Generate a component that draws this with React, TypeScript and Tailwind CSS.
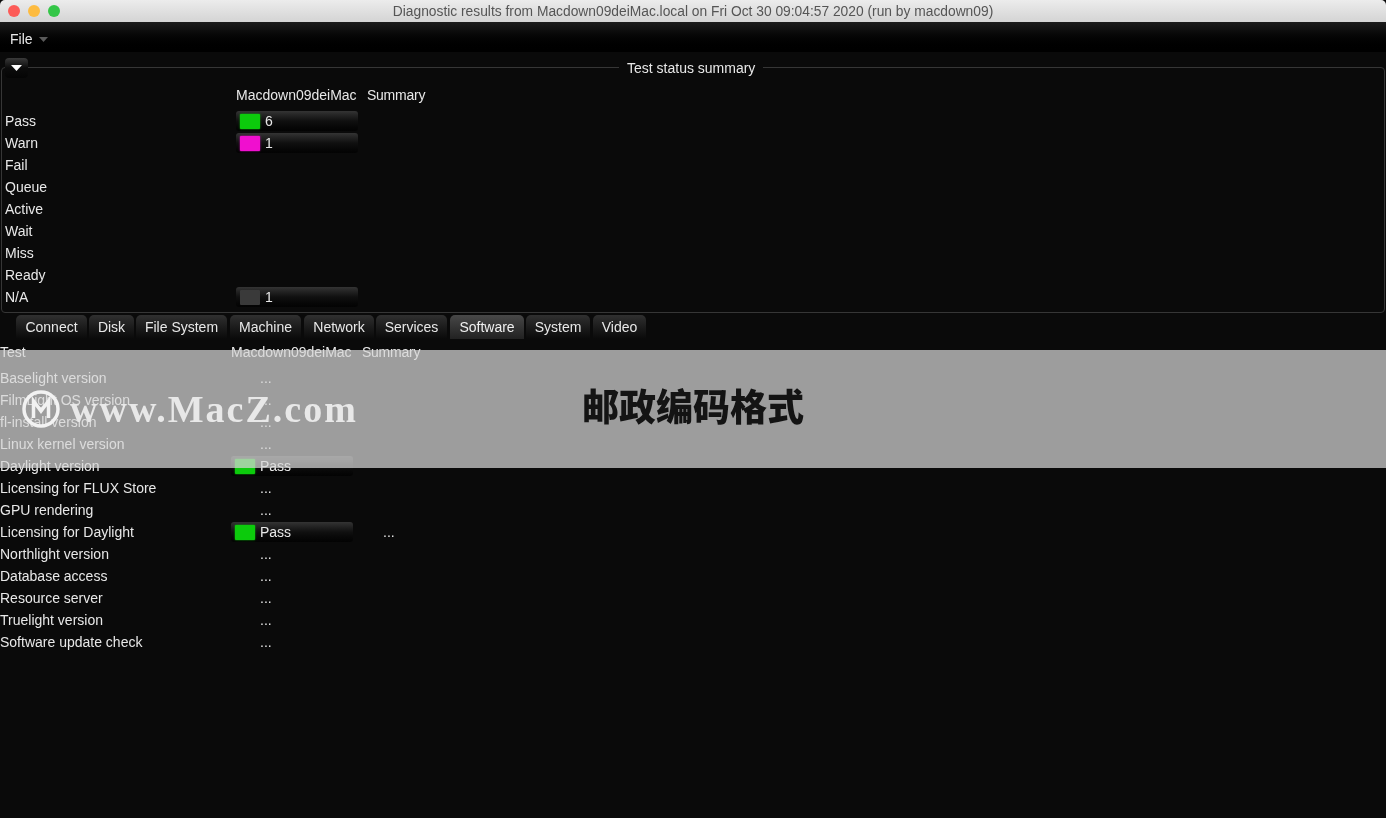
import React from 'react';

type Status = { color: string; label: string };

const summaryRows: { name: string; status?: Status }[] = [
  { name: 'Pass', status: { color: 'bg-[#0ccb0c] shadow-[0_0_2px_#0ccb0c]', label: '6' } },
  { name: 'Warn', status: { color: 'bg-[#f00fcf] shadow-[0_0_2px_#f00fcf]', label: '1' } },
  { name: 'Fail' },
  { name: 'Queue' },
  { name: 'Active' },
  { name: 'Wait' },
  { name: 'Miss' },
  { name: 'Ready' },
  { name: 'N/A', status: { color: 'bg-[#3a3a3a]', label: '1' } },
];

const pass = { color: 'bg-[#0ccb0c] shadow-[0_0_2px_#0ccb0c]', label: 'Pass' };

const softwareRows: { name: string; status?: Status; extra?: boolean }[] = [
  { name: 'Baselight version' },
  { name: 'FilmLight OS version' },
  { name: 'fl-install version' },
  { name: 'Linux kernel version' },
  { name: 'Daylight version', status: pass },
  { name: 'Licensing for FLUX Store' },
  { name: 'GPU rendering' },
  { name: 'Licensing for Daylight', status: pass, extra: true },
  { name: 'Northlight version' },
  { name: 'Database access' },
  { name: 'Resource server' },
  { name: 'Truelight version' },
  { name: 'Software update check' },
];

const tabs = [
  { name: 'Connect', cls: 'w-[71px] mr-[2px]' },
  { name: 'Disk', cls: 'w-[45px] mr-[2px]' },
  { name: 'File System', cls: 'w-[91px] mr-[3px]' },
  { name: 'Machine', cls: 'w-[71px] mr-[3px]' },
  { name: 'Network', cls: 'w-[70px] mr-[2px]' },
  { name: 'Services', cls: 'w-[71px] mr-[3px]' },
  { name: 'Software', cls: 'w-[74px] mr-[2px]', active: true },
  { name: 'System', cls: 'w-[64px] mr-[3px]' },
  { name: 'Video', cls: 'w-[53px]' },
];

function StatusBar({ status }: { status: Status }) {
  return (
    <div className="flex h-[20px] w-[122px] items-center rounded-[3px] bg-gradient-to-b from-[#343434] via-[#101010] to-[#030303] pl-[4px]">
      <div className={`h-[15px] w-[20px] rounded-[1px] ${status.color}`} />
      <span className="ml-[5px]">{status.label}</span>
    </div>
  );
}

function ResultRow({ name, status, extra, dots }: { name: string; status?: Status; extra?: boolean; dots?: boolean }) {
  return (
    <div className="grid h-[22px] grid-cols-[231px_131px_1fr] items-center">
      <div>{name}</div>
      <div>{status ? <StatusBar status={status} /> : dots ? <span className="pl-[29px]">...</span> : null}</div>
      <div>{extra ? <span className="pl-[21px]">...</span> : null}</div>
    </div>
  );
}

function HeaderRow({ first }: { first: string }) {
  return (
    <div className="mb-[4px] grid h-[22px] grid-cols-[231px_131px_1fr] items-center">
      <div>{first}</div>
      <div>Macdown09deiMac</div>
      <div className="tracking-[-0.25px]">Summary</div>
    </div>
  );
}

export default function App() {
  return (
    <div className="relative h-[818px] w-[1386px] overflow-hidden bg-[#0a0a0a] font-['Liberation_Sans',Arial,sans-serif] text-[14px] text-[#e8e8e8]">
      {/* title bar */}
      <div className="relative flex h-[22px] items-center justify-center rounded-t-[5px] bg-gradient-to-b from-[#ececec] to-[#d4d4d4] pt-[2px] text-[13.8px] text-[#555555]">
        <div className="absolute left-[8px] top-[5px] flex gap-[8px]">
          <div className="h-[12px] w-[12px] rounded-full bg-[#fc5b57]" />
          <div className="h-[12px] w-[12px] rounded-full bg-[#fdbb40]" />
          <div className="h-[12px] w-[12px] rounded-full bg-[#34c648]" />
        </div>
        Diagnostic results from Macdown09deiMac.local on Fri Oct 30 09:04:57 2020 (run by macdown09)
      </div>

      {/* menu */}
      <div className="flex h-[30px] items-center bg-gradient-to-b from-[#1b1b1b] via-[#050505] to-[#000000] pl-[10px] pt-[4px]">
        <span>File</span>
        <svg className="ml-[6px] mt-[1px]" width="9" height="5" viewBox="0 0 9 5">
          <path d="M0 0h9L4.5 5z" fill="#5a5a5a" />
        </svg>
      </div>

      {/* test status summary */}
      <div className="relative mx-[1px] mt-[15px] h-[246px] rounded-[4px] border border-[#363636] pl-[3px] pt-[16px]">
        <div className="absolute left-[3px] top-[-10px] flex h-[20px] w-[23px] items-center justify-center rounded-[4px] bg-gradient-to-b from-[#3a3a3a] via-[#0c0c0c] to-[#050505]">
          <svg width="11" height="6" viewBox="0 0 11 6">
            <path d="M0 0h11L5.5 6z" fill="#ffffff" />
          </svg>
        </div>
        <div className="absolute left-[617px] top-[-8px] bg-[#0a0a0a] px-[8px] leading-[16px]">Test status summary</div>
        <HeaderRow first="" />
        {summaryRows.map((row) => (
          <ResultRow key={row.name} name={row.name} status={row.status} />
        ))}
      </div>

      {/* tabs */}
      <div className="mt-[2px] flex h-[24px] pl-[16px]">
        {tabs.map((tab) => (
          <div
            key={tab.name}
            className={`flex items-center justify-center rounded-t-[5px] bg-gradient-to-b ${tab.cls} ${
              tab.active ? 'from-[#484848] to-[#222222] text-[#f0f0f0]' : 'from-[#303030] to-[#0a0a0a]'
            }`}
          >
            {tab.name}
          </div>
        ))}
      </div>

      {/* software results */}
      <div className="mt-[2px]">
        <HeaderRow first="Test" />
        {softwareRows.map((row) => (
          <ResultRow key={row.name} name={row.name} status={row.status} extra={row.extra} dots />
        ))}
      </div>

      {/* watermark banner */}
      <div className="absolute left-0 top-[350px] h-[118px] w-full bg-[#999999] mix-blend-screen" />
      <div className="absolute left-0 top-[350px] h-[118px] w-full bg-[rgba(158,158,158,0.3)]">
        <svg className="absolute left-[22px] top-[40px]" width="38" height="38" viewBox="0 0 38 38" fill="none">
          <circle cx="19" cy="19" r="17" stroke="#f2f2f2" strokeWidth="3.5" />
          <path d="M11.5 28V11l7.5 10 7.5-10v17" stroke="#f2f2f2" strokeWidth="3.5" />
        </svg>
        <div className="absolute left-[70px] top-[37px] font-['Liberation_Serif',serif] text-[38px] font-bold leading-[44px] tracking-[2px] text-[#e8e8e8]">
          www.MacZ.com
        </div>
        <div className="absolute left-[582px] top-[32px] font-['Noto_Sans_CJK_SC',sans-serif] text-[37px] font-black leading-[46px] text-[#141414]">
          邮政编码格式
        </div>
      </div>
    </div>
  );
}
